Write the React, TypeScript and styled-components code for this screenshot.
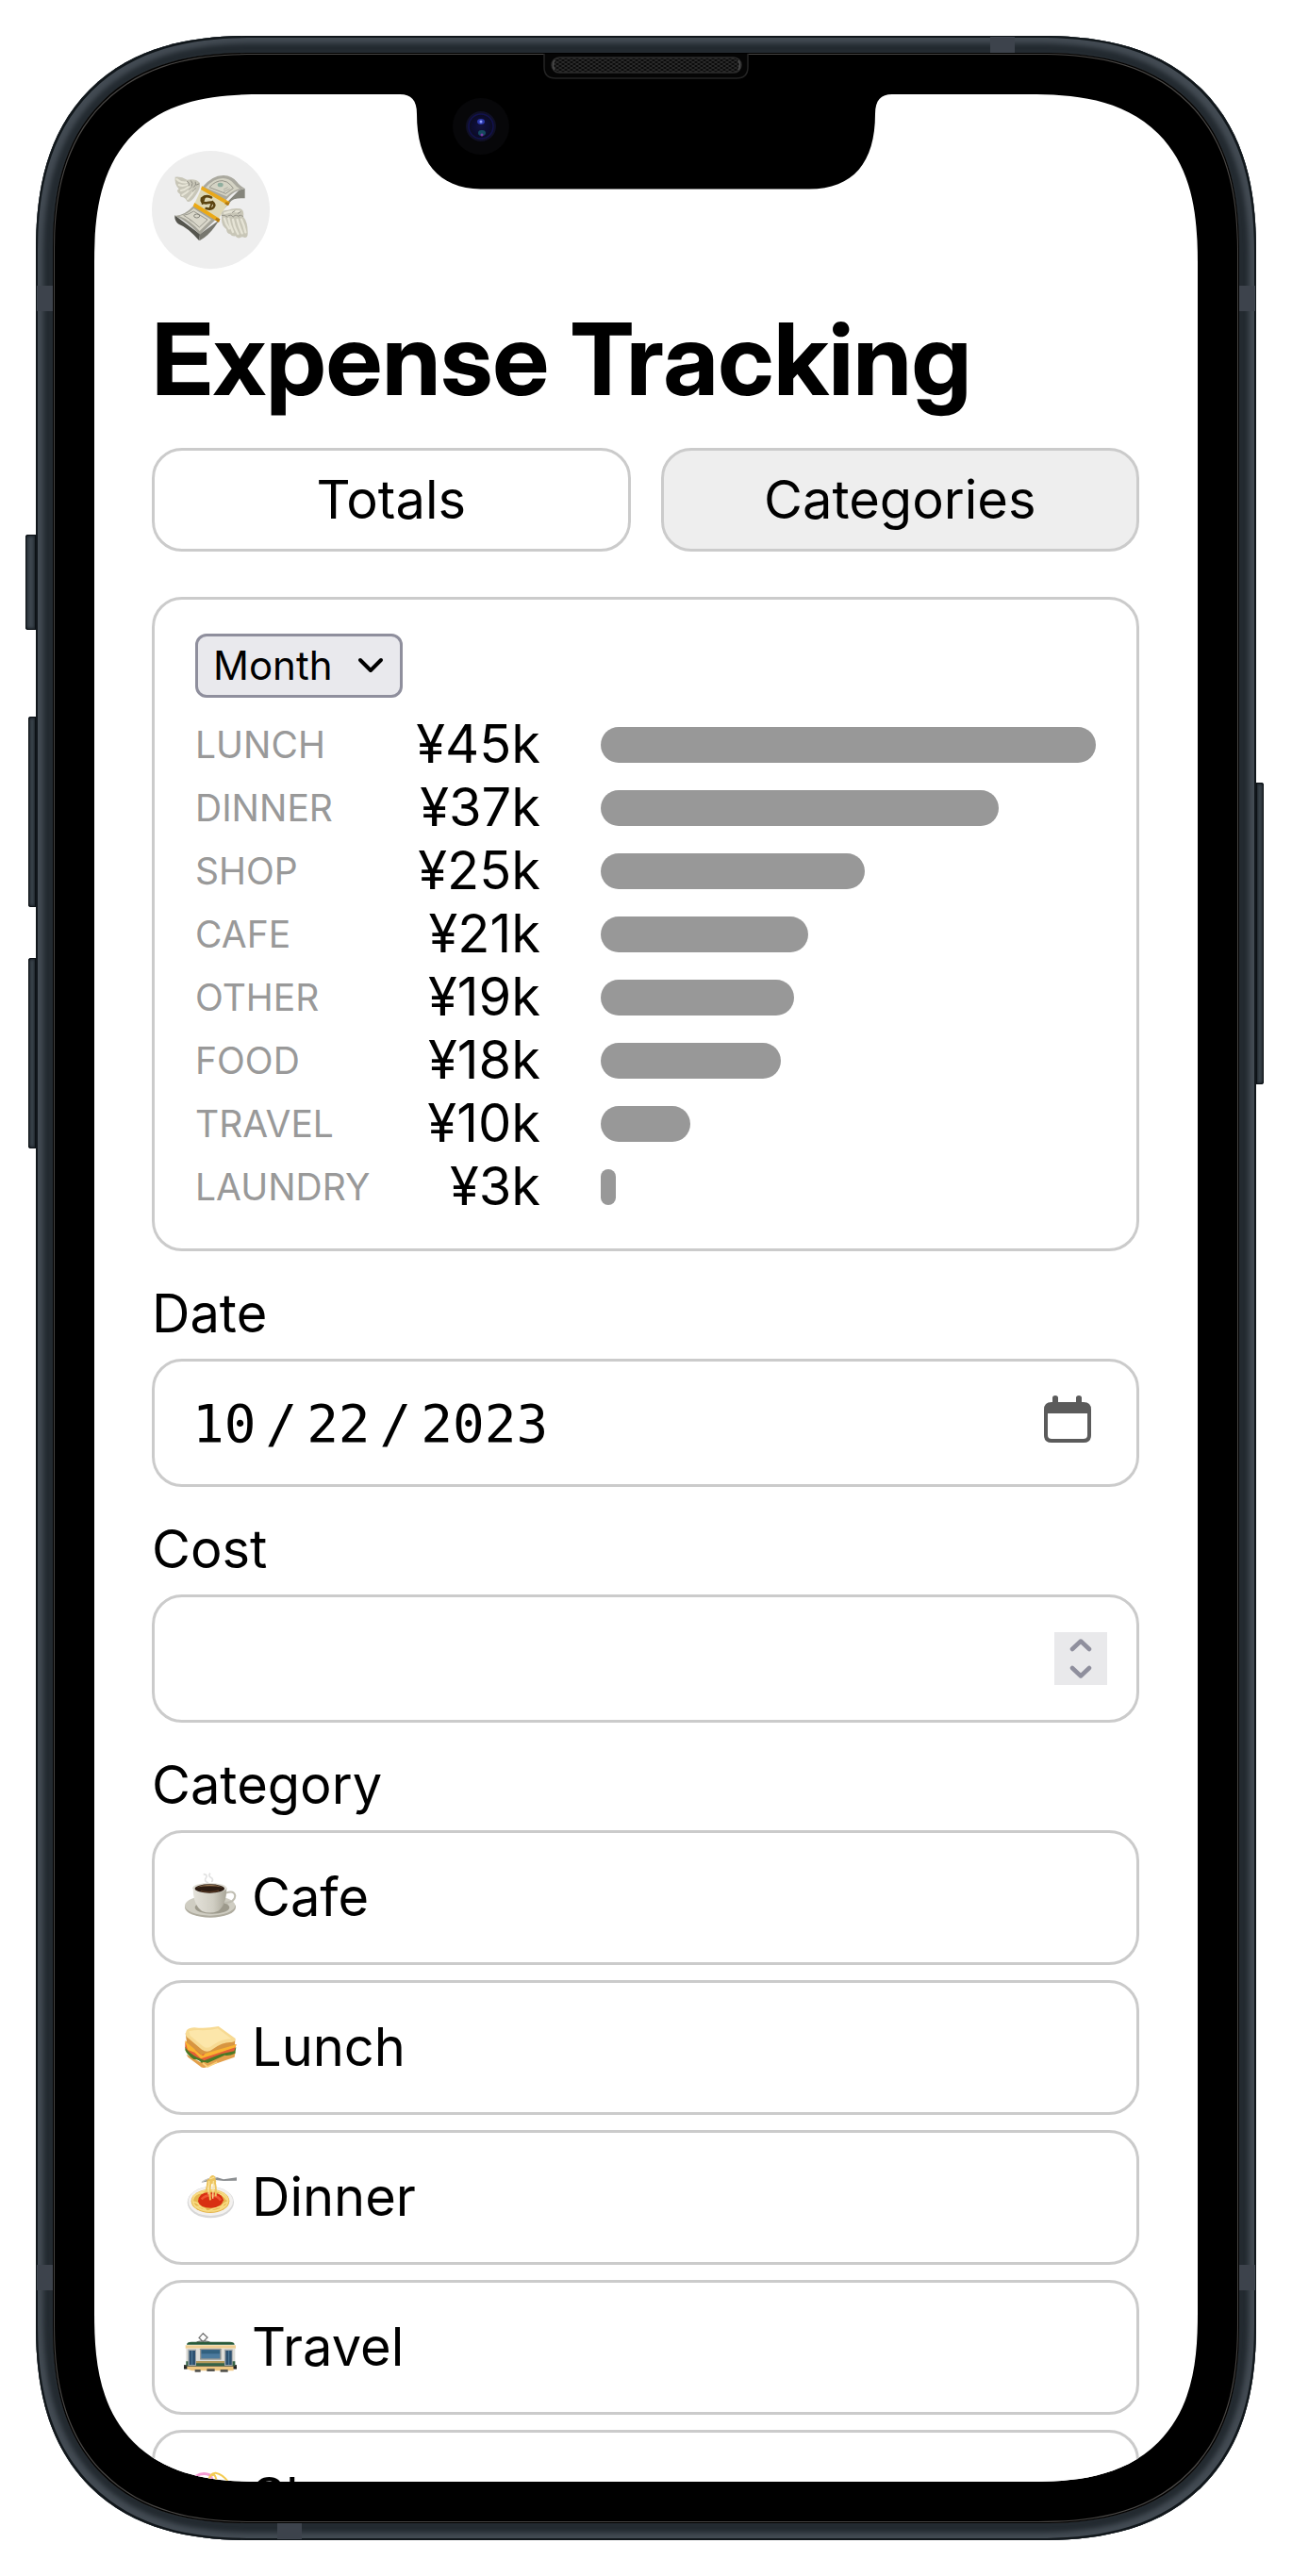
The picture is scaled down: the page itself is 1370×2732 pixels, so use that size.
import React, { useState } from "react";
import styled, { createGlobalStyle, css } from "styled-components";

const colors = {
  text: "#000",
  muted: "#999",
  line: "#cbcbcb",
  fill: "#eee",
  bar: "#989898",
  control: "#e9e9ed",
  controlLine: "#8f8f9d",
};

const GlobalStyle = createGlobalStyle`
  *, *::before, *::after { box-sizing: border-box; }
  body { margin: 0; background: #fff; }
  button, input, select { font: inherit; color: inherit; margin: 0; }
`;

/* ---------- phone ---------- */

const corner = (plain: number, smooth: number, curve: number) => css`
  border-radius: ${plain}px;
  @supports (corner-shape: squircle) {
    border-radius: ${smooth}px;
    corner-shape: superellipse(${curve});
  }
`;

const Page = styled.div`
  height: 100vh;
  padding: 38px;
  font-family: Inter, "Liberation Sans", sans-serif;
  font-size: 56px;
  line-height: 67px;
  color: ${colors.text};
`;

const Device = styled.div`
  position: relative;
  height: 100%;
  padding: 18px;
  background: #232a30;
  box-shadow: inset 0 0 0 2px #11171b, inset 0 0 5px 8px #434b53;
  ${corner(195, 230, 1.28)}
`;

const Bezel = styled.div`
  height: 100%;
  padding: 44px;
  background: #000;
  box-shadow: inset 0 0 0 1px #000, inset 0 0 0 2px #484644;
  ${corner(178, 212, 1.3)}
`;

const Screen = styled.main`
  height: 100%;
  padding: 60px 62px 0 61px;
  overflow: hidden;
  background: #fff;
  ${corner(142, 180, 1.39)}
`;

type Side = "left" | "right";

const SideButton = styled.span<{ $side: Side; $top: number; $length: number; $depth: number }>`
  position: absolute;
  ${(p) => p.$side}: ${(p) => -p.$depth}px;
  top: ${(p) => p.$top}px;
  width: ${(p) => p.$depth}px;
  height: ${(p) => p.$length}px;
  border-radius: ${(p) => (p.$side === "left" ? "3px 0 0 3px" : "0 3px 3px 0")};
  background: #3c454d;
  box-shadow: inset 0 0 0 1px #0c1115, inset 0 0 3px 2px #1c2329;
`;

const SideBand = styled.span<{ $side: Side; $edge: "top" | "bottom" }>`
  position: absolute;
  ${(p) => p.$side}: 1px;
  ${(p) => p.$edge}: 265px;
  width: 17px;
  height: 27px;
  background: #3d434c;
`;

const EndBand = styled.span<{ $side: Side; $edge: "top" | "bottom" }>`
  position: absolute;
  ${(p) => p.$edge}: 1px;
  ${(p) => p.$side}: 256px;
  width: 26px;
  height: 17px;
  background: #3d434c;
`;

const NotchArt = styled.svg`
  position: absolute;
  top: 18px;
  left: 50%;
  margin-left: -265px;
  display: block;
`;

function Notch() {
  return (
    <NotchArt width="530" height="146" viewBox="420 56 530 146" aria-hidden="true">
      <defs>
        <pattern id="mesh" width="6" height="4" patternUnits="userSpaceOnUse">
          <rect width="6" height="4" fill="#0c0c0c" />
          <path d="M0 0l3 2 3-2M0 4l3-2 3 2" stroke="#2e2e2e" strokeWidth="1" fill="none" />
        </pattern>
        <radialGradient id="lens">
          <stop offset="0" stopColor="#12123e" />
          <stop offset="0.7" stopColor="#0c0c30" />
          <stop offset="1" stopColor="#0d0d1c" />
        </radialGradient>
      </defs>
      <path d="M420 99h4v1C436 100 442 106 442 121C442 172 465 200.500 512 200.500H858C905 200.500 928 172 928 121C928 106 934 100 946 100v-1h4V60H420Z" fill="#000" />
      <path d="M577 57V71q0 12 12 12H781q12 0 12-12V57" fill="#050505" stroke="#242424" strokeWidth="1.500" />
      <rect x="585" y="61" width="201" height="16" rx="8" fill="url(#mesh)" stroke="#2c2c2c" strokeWidth="1.500" />
      <path d="M588 64q-3 5 0 10M783 64q3 5 0 10" stroke="#4c4c4c" strokeWidth="1.500" fill="none" />
      <circle cx="510" cy="134" r="30" fill="#070709" />
      <circle cx="510" cy="134" r="16" fill="#101026" />
      <circle cx="510" cy="134" r="13" fill="url(#lens)" stroke="#12124e" strokeWidth="1.500" />
      <ellipse cx="510" cy="129" rx="4" ry="3" fill="#2a36a8" />
      <circle cx="510" cy="129" r="1.500" fill="#8d9bff" />
      <ellipse cx="511" cy="141" rx="4" ry="3" fill="#15495f" />
      <circle cx="511" cy="143" r="1.500" fill="#7b39a8" />
    </NotchArt>
  );
}

/* ---------- header ---------- */

const Avatar = styled.div`
  display: flex;
  align-items: center;
  justify-content: center;
  width: 125px;
  height: 125px;
  padding-bottom: 6px;
  border-radius: 50%;
  background: ${colors.fill};
`;

const Title = styled.h1`
  margin: 32px 0 30px;
  font-family: "Inter Display", Inter, "Liberation Sans", sans-serif;
  font-size: 106px;
  line-height: 128px;
  font-weight: 700;
  white-space: nowrap;
`;

const Tabs = styled.div`
  display: grid;
  grid-template-columns: 1fr 1fr;
  gap: 32px;
`;

const Tab = styled.button<{ $active: boolean }>`
  height: 110px;
  padding: 0;
  border: 3px solid ${colors.line};
  border-radius: 32px;
  background: ${(p) => (p.$active ? colors.fill : "#fff")};
`;

/* ---------- chart ---------- */

const Card = styled.section`
  margin-top: 48px;
  padding: 36px 43px 32px;
  border: 3px solid ${colors.line};
  border-radius: 32px;
`;

const Picker = styled.div`
  display: grid;
  width: max-content;
  margin-bottom: 16px;
  align-items: center;
`;

const PeriodSelect = styled.select`
  grid-area: 1 / 1;
  height: 68px;
  padding: 0 71px 0 16px;
  border: 3px solid ${colors.controlLine};
  border-radius: 12px;
  background: ${colors.control};
  font-size: 42px;
  line-height: 60px;
  appearance: none;
`;

const Chevron = styled.svg`
  grid-area: 1 / 1;
  justify-self: end;
  margin-right: 20px;
  pointer-events: none;
`;

const Chart = styled.ul`
  margin: 0;
  padding: 0;
  list-style: none;
`;

const ChartRow = styled.li`
  display: grid;
  grid-template-columns: 200px 166px 1fr;
  align-items: center;
  height: 67px;
`;

const RowName = styled.span`
  font-size: 39px;
  color: ${colors.muted};
  text-transform: uppercase;
`;

const RowValue = styled.span`
  text-align: right;
`;

const Track = styled.div`
  margin-left: 64px;
`;

const Bar = styled.div`
  height: 38px;
  border-radius: 19px;
  background: ${colors.bar};
`;

/* ---------- form ---------- */

const Field = styled.div`
  margin-top: 33px;
`;

const FieldLabel = styled.label`
  display: block;
  margin-bottom: 14px;
`;

const InputBox = styled.div<{ $end: number }>`
  display: flex;
  align-items: center;
  height: 136px;
  padding: 0 ${(p) => p.$end}px 0 40px;
  border: 3px solid ${colors.line};
  border-radius: 32px;
`;

const TextInput = styled.input`
  flex: 1;
  min-width: 0;
  height: 100%;
  padding: 0;
  border: 0;
  outline: 0;
  background: transparent;
  font-family: "DejaVu Sans Mono", "Liberation Mono", monospace;
  font-size: 56px;
  appearance: textfield;

  &::-webkit-inner-spin-button,
  &::-webkit-outer-spin-button {
    appearance: none;
    margin: 0;
  }
  &::-webkit-calendar-picker-indicator {
    display: none;
  }
  &::-webkit-datetime-edit,
  &::-webkit-datetime-edit-month-field,
  &::-webkit-datetime-edit-day-field,
  &::-webkit-datetime-edit-year-field {
    padding: 0;
  }
  &::-webkit-datetime-edit-text {
    padding: 0 10px;
  }
`;

const IconButton = styled.button`
  display: flex;
  padding: 0 0 8px;
  border: 0;
  background: transparent;
`;

const Stepper = styled.div`
  display: flex;
  flex-direction: column;
  width: 56px;
  height: 56px;
  background: #e9e9eb;
`;

const StepButton = styled.button`
  display: flex;
  flex: 1;
  align-items: center;
  justify-content: center;
  padding: 0;
  border: 0;
  background: transparent;
`;

const CategoryField = styled.fieldset`
  margin: 33px 0 0;
  padding: 0;
  border: 0;
`;

const Legend = styled.legend`
  padding: 0;
  margin-bottom: 14px;
`;

const Options = styled.div`
  display: flex;
  flex-direction: column;
  gap: 16px;
`;

const Option = styled.label<{ $active: boolean }>`
  display: flex;
  align-items: center;
  gap: 16px;
  height: 143px;
  padding: 0 31px;
  border: 3px solid ${colors.line};
  border-radius: 32px;
  background: ${(p) => (p.$active ? colors.fill : "#fff")};
`;

const HiddenRadio = styled.input`
  position: absolute;
  opacity: 0;
  pointer-events: none;
`;

/* ---------- drawings ---------- */

function MoneyArt() {
  return (
    <svg width="80" height="70" viewBox="132 132 240 210" role="img" aria-label="Money with wings">
      <path d="M136 262L216 322L214 343Q176 300 150 291Q138 284 136 270Z" fill="#55554e" />
      <path d="M216 322L262 276L311 221Q322 205 359 208L359 177L340 182L224 300Z" fill="#85857c" />
      <path d="M216 322L278 277L262 300Q240 330 214 343Z" fill="#77776f" />
      <path d="M222 174Q255 134 292 135Q318 136 334 156Q342 168 359 177Q327 184 311 200L296 216Z" fill="#aaa99f" />
      <path d="M234 174Q260 144 289 144Q310 145 324 161Q331 171 343 177Q320 182 301 202Z" fill="#d4d3c4" />
      <path d="M246 173Q266 151 288 152Q304 154 314 166L322 176L298 193Z" fill="none" stroke="#97968b" strokeWidth="3" />
      <path d="M136 264Q166 264 196 232L265 277L216 323Q168 275 136 264Z" fill="#a5a499" />
      <path d="M150 264Q176 260 196 240L252 276L215 312Q182 276 150 264Z" fill="#d9d7ca" />
      <path d="M164 262Q180 260 196 249L240 276L214 300Q190 276 164 262Z" fill="none" stroke="#99988e" strokeWidth="3" />
      <ellipse cx="281" cy="165" rx="9" ry="7" fill="#8fae9e" />
      <ellipse cx="206" cy="264" rx="9" ry="6" fill="none" stroke="#85857b" strokeWidth="3" />
      <path d="M291 180l14-7M291 187l20-9M182 276l12 8" stroke="#aeada2" strokeWidth="3" />
      <path d="M222 174L306 222L272 279L196 231Z" fill="#ded8b6" />
      <path d="M222 169L311 220L306 230L219 180Z" fill="#e9a91b" />
      <path d="M199 222L280 274L276 284L194 233Z" fill="#eba914" />
      <path d="M299 220l12 1-5 11-12-7ZM268 270l12 4-4 10-12-7Z" fill="#b47a10" />
      <g stroke="#5c4410" strokeWidth="8" fill="none" strokeLinecap="round">
        <path d="M252 205Q234 196 222 208Q217 224 237 223Q261 216 262 231Q258 246 236 240" />
        <path d="M232 201L224 225M256 218L247 242" strokeWidth="6" />
      </g>
      <path d="M137 140Q156 137 175 149Q203 144 215 158Q220 174 203 198Q187 223 176 218Q170 208 163 205Q150 204 153 195Q137 185 149 178Q134 162 137 140Z" fill="#c8c6b8" />
      <g stroke="#e6e4d6" strokeWidth="6" fill="none" strokeLinecap="round">
        <path d="M142 147Q156 160 174 157M149 165Q160 171 178 164M156 183Q168 181 182 170M160 198Q174 191 188 176M177 210Q190 198 199 181" />
      </g>
      <g stroke="#8e8c82" strokeWidth="3" fill="none" strokeLinecap="round">
        <path d="M176 154q8 7 5 14M188 152q8 8 2 17M202 156q4 10-5 16M181 181l8-8M193 186l9-9M205 165l8-3" />
      </g>
      <path d="M285 262Q280 246 305 245Q322 238 344 241Q358 246 354 266Q369 284 368 320Q368 334 358 333Q350 329 345 333Q334 337 329 328Q319 331 312 322Q301 320 300 306Q285 296 285 276Z" fill="#c8c6b7" />
      <g stroke="#e6e4d6" strokeWidth="7" fill="none" strokeLinecap="round">
        <path d="M294 272Q298 289 309 304M307 272Q310 292 321 315M321 276Q324 299 337 321M335 276Q341 300 350 319M348 275Q357 295 361 316M295 255Q315 247 341 250" />
      </g>
      <g stroke="#96948a" strokeWidth="3" fill="none" strokeLinecap="round">
        <path d="M286 262q10-2 17 5M306 263q10-6 16 4M323 265q10-8 17 2M339 263q8-4 14 2M319 253l8-5M337 256l8-5" />
      </g>
    </svg>
  );
}

const Emoji = ({ children }: { children: React.ReactNode }) => (
  <svg width="56" height="56" viewBox="0 0 168 168" aria-hidden="true">
    {children}
  </svg>
);

const CoffeeArt = () => (
  <Emoji>
    <defs>
      <linearGradient id="cup" x1="0" x2="1">
        <stop offset="0" stopColor="#e4e2da" />
        <stop offset="0.6" stopColor="#d0cec3" />
        <stop offset="1" stopColor="#a9a698" />
      </linearGradient>
    </defs>
    <path d="M62 8q16 2 8 12t8 16M84 5q-8 8 2 14t2 14" stroke="#e2e2e2" strokeWidth="5" fill="none" />
    <ellipse cx="84" cy="113" rx="81" ry="33" fill="#aeab9e" />
    <ellipse cx="83" cy="108" rx="80" ry="32" fill="#cfcdc2" />
    <ellipse cx="90" cy="114" rx="55" ry="20" fill="#9d9a8c" />
    <path d="M134 68Q160 58 163 77Q162 99 130 99" fill="none" stroke="#bfbdb1" strokeWidth="6" />
    <path d="M29 51Q29 105 57 125Q82 136 109 125Q136 105 136 51Z" fill="url(#cup)" />
    <ellipse cx="82" cy="52" rx="54" ry="16" fill="#dedcd3" />
    <ellipse cx="82" cy="54" rx="47" ry="14" fill="#2c1c12" />
    <path d="M39 50Q82 33 125 50Q82 42 39 50Z" fill="#9b7a56" />
    <path d="M54 61Q82 69 111 60" stroke="#523521" strokeWidth="4" fill="none" />
  </Emoji>
);

const SandwichArt = () => (
  <Emoji>
    <path d="M8 104L52 129L164 96L161 113L75 143Q60 152 50 141L13 113Z" fill="#e3a04b" />
    <path d="M4 80L57 113L166 82L163 101Q142 110 130 107L75 132Q65 127 56 131Q45 118 31 120Q10 106 4 91Z" fill="#4b7a25" />
    <path d="M4 66L58 100L167 73L160 94L119 103L65 124L41 113Q20 104 4 82Z" fill="#e45e36" />
    <path d="M3 61Q27 70 37 91Q49 104 61 109L73 95L166 72L164 82L88 107L54 118L34 98L12 90Z" fill="#f9b431" />
    <path d="M5 37L56 80Q74 90 88 78L163 58L162 74L87 96L56 106L9 67Z" fill="#d79541" />
    <path d="M9 27Q22 15 47 20Q76 22 110 15L164 54Q166 63 151 66Q124 64 93 87Q76 102 57 89L8 48Q3 39 9 27Z" fill="#f7da93" />
    <path d="M16 31Q40 25 60 28Q88 28 108 22L151 55Q119 55 91 76Q74 90 60 78L20 45Z" fill="#fce6aa" />
    <path d="M60 132l15 12 31-15" stroke="#f7ce78" strokeWidth="5" fill="none" />
  </Emoji>
);

const SpaghettiArt = () => (
  <Emoji>
    <ellipse cx="85" cy="98" rx="74" ry="50" fill="#d7d7d7" />
    <ellipse cx="85" cy="95" rx="71" ry="46" fill="#f3f1ef" />
    <ellipse cx="84" cy="94" rx="61" ry="38" fill="#e5b64e" />
    <g fill="none" stroke="#f8dc84" strokeWidth="5">
      <ellipse cx="84" cy="93" rx="56" ry="33" />
      <path d="M28 80q26-22 48-5M92 72q30-7 45 19M35 113q17-5 36 9M77 127q24-16 55-16M30 97q15 0 26 18M116 120q4-16 22-23" />
    </g>
    <path d="M45 95Q47 67 80 66Q121 66 126 91Q119 116 87 116Q50 115 45 95Z" fill="#d82f12" />
    <path d="M56 88q14-14 34-12t27 16" stroke="#ef5530" strokeWidth="8" fill="none" />
    <path d="M55 35Q76 19 101 17L126 25L168 19V29L126 30L100 27Z" fill="#8d9092" />
    <path d="M58 33Q80 18 104 20" stroke="#c7c9ca" strokeWidth="4" fill="none" />
    <path d="M77 25Q75 48 70 66M88 24Q79 58 84 91M95 25Q104 45 101 79" fill="none" stroke="#edc45d" strokeWidth="6" />
    <path d="M83 17Q90 8 99 16L103 34Q86 45 75 34Z" fill="#edc45d" />
    <path d="M80 30l-2 43M94 30l-2 56M82 24l15-6" stroke="#fbe398" strokeWidth="4" />
  </Emoji>
);

const TramArt = () => (
  <Emoji>
    <path d="M48 52L61 38L75 51L61 65ZM41 66Q61 59 82 66" fill="none" stroke="#777" strokeWidth="4" />
    <path d="M9 74Q9 65 24 65H146Q161 65 161 74Z" fill="#285a38" />
    <path d="M5 76H165V86H5Z" fill="#efcf94" />
    <path d="M7 86H163V140H7Z" fill="#deddd8" />
    <path d="M0 138H168V151H0Z" fill="#484842" />
    <path d="M7 127H163V142H7Z" fill="#366347" />
    <path d="M33 126H130V133H33Z" fill="#b59a5d" />
    <path d="M9 143H158V157H25L9 151Z" fill="#efc782" />
    <rect x="13" y="89" width="26" height="52" fill="#9ea5a8" />
    <rect x="17" y="93" width="19" height="45" fill="#2c506f" />
    <rect x="129" y="89" width="26" height="52" fill="#9ea5a8" />
    <rect x="133" y="93" width="19" height="45" fill="#2c506f" />
    <path d="M26 93v45M143 93v45" stroke="#54809f" strokeWidth="3" />
    <rect x="51" y="86" width="68" height="36" rx="2" fill="#999994" />
    <rect x="55" y="90" width="60" height="28" fill="#4b7a9d" />
    <path d="M56 91h58v12H56Z" fill="#32617f" />
    <path d="M35 157h18M73 155h25M116 157h24" stroke="#55544e" strokeWidth="8" />
    <path d="M0 147h10M158 147h10" stroke="#222" strokeWidth="9" />
  </Emoji>
);

const BagsArt = () => (
  <Emoji>
    <path d="M38 55V16Q60 2 83 12Q92 24 95 57" fill="none" stroke="#f59bd3" strokeWidth="9" />
    <path d="M76 48Q78 4 101 5Q128 10 147 43M89 13Q103 3 106 48M120 35h36" fill="none" stroke="#f3cb52" strokeWidth="6" />
    <path d="M18 58H93L101 160H9Z" fill="#ec6ebc" />
    <path d="M80 49H158L151 151H86Z" fill="#f3c340" />
  </Emoji>
);

function CalendarArt() {
  return (
    <svg width="50" height="50" viewBox="0 0 50 50" aria-hidden="true">
      <path
        fillRule="evenodd"
        fill="#5b5b5b"
        d="M9 7V2.500Q9 0 12 0t3 2.500V7H34V2.500Q34 0 37 0t3 2.500V7h2q8 0 8 8V42q0 8-8 8H8q-8 0-8-8V15Q0 7 8 7ZM4 19V42q0 4 4 4H42q4 0 4-4V19Z"
      />
    </svg>
  );
}

function StepArt({ up }: { up?: boolean }) {
  return (
    <svg width="24" height="14" viewBox="0 0 24 14" aria-hidden="true">
      <path
        d={up ? "M3 11L12 2.500L21 11" : "M3 3L12 11.500L21 3"}
        fill="none"
        stroke={colors.controlLine}
        strokeWidth="4.500"
        strokeLinecap="round"
        strokeLinejoin="round"
      />
    </svg>
  );
}

/* ---------- data ---------- */

const spending = [
  { name: "Lunch", value: "¥45k", share: 100 },
  { name: "Dinner", value: "¥37k", share: 80.4 },
  { name: "Shop", value: "¥25k", share: 53.3 },
  { name: "Cafe", value: "¥21k", share: 41.9 },
  { name: "Other", value: "¥19k", share: 39 },
  { name: "Food", value: "¥18k", share: 36.4 },
  { name: "Travel", value: "¥10k", share: 18.1 },
  { name: "Laundry", value: "¥3k", share: 3 },
];

const categories = [
  { name: "Cafe", Art: CoffeeArt },
  { name: "Lunch", Art: SandwichArt },
  { name: "Dinner", Art: SpaghettiArt },
  { name: "Travel", Art: TramArt },
  { name: "Shop", Art: BagsArt },
];

export default function App() {
  const [tab, setTab] = useState("Categories");
  const [date, setDate] = useState("2023-10-22");
  const [cost, setCost] = useState("");
  const [category, setCategory] = useState("");

  const step = (by: number) => setCost(String(Number(cost) + by));

  return (
    <>
      <GlobalStyle />
      <Page>
        <Device>
          <SideButton $side="left" $top={529} $length={101} $depth={11} />
          <SideButton $side="left" $top={722} $length={202} $depth={8} />
          <SideButton $side="left" $top={978} $length={202} $depth={8} />
          <SideButton $side="right" $top={792} $length={320} $depth={8} />
          <SideBand $side="left" $edge="top" />
          <SideBand $side="right" $edge="top" />
          <SideBand $side="left" $edge="bottom" />
          <SideBand $side="right" $edge="bottom" />
          <EndBand $side="right" $edge="top" />
          <EndBand $side="left" $edge="bottom" />
          <Bezel>
            <Screen>
              <Avatar>
                <MoneyArt />
              </Avatar>
              <Title>Expense Tracking</Title>
              <Tabs>
                {["Totals", "Categories"].map((name) => (
                  <Tab key={name} type="button" $active={tab === name} aria-pressed={tab === name} onClick={() => setTab(name)}>
                    {name}
                  </Tab>
                ))}
              </Tabs>

              <Card>
                <Picker>
                  <PeriodSelect aria-label="Period" defaultValue="Month">
                    <option>Month</option>
                    <option>Week</option>
                    <option>Year</option>
                  </PeriodSelect>
                  <Chevron width="28" height="18" viewBox="0 0 28 18" aria-hidden="true">
                    <path d="M3 3L14 14L25 3" fill="none" stroke="#000" strokeWidth="4" strokeLinecap="round" strokeLinejoin="round" />
                  </Chevron>
                </Picker>
                <Chart>
                  {spending.map((row) => (
                    <ChartRow key={row.name}>
                      <RowName>{row.name}</RowName>
                      <RowValue>{row.value}</RowValue>
                      <Track>
                        <Bar style={{ width: `${row.share}%` }} />
                      </Track>
                    </ChartRow>
                  ))}
                </Chart>
              </Card>

              <Field>
                <FieldLabel htmlFor="date">Date</FieldLabel>
                <InputBox $end={48}>
                  <TextInput id="date" type="date" value={date} onChange={(e) => setDate(e.target.value)} />
                  <IconButton type="button" aria-label="Open calendar">
                    <CalendarArt />
                  </IconButton>
                </InputBox>
              </Field>

              <Field>
                <FieldLabel htmlFor="cost">Cost</FieldLabel>
                <InputBox $end={31}>
                  <TextInput id="cost" type="number" value={cost} onChange={(e) => setCost(e.target.value)} />
                  <Stepper>
                    <StepButton type="button" aria-label="Increase cost" onClick={() => step(1)}>
                      <StepArt up />
                    </StepButton>
                    <StepButton type="button" aria-label="Decrease cost" onClick={() => step(-1)}>
                      <StepArt />
                    </StepButton>
                  </Stepper>
                </InputBox>
              </Field>

              <CategoryField>
                <Legend>Category</Legend>
                <Options>
                  {categories.map(({ name, Art }) => (
                    <Option key={name} $active={category === name}>
                      <HiddenRadio type="radio" name="category" checked={category === name} onChange={() => setCategory(name)} />
                      <Art />
                      {name}
                    </Option>
                  ))}
                </Options>
              </CategoryField>
            </Screen>
          </Bezel>
          <Notch />
        </Device>
      </Page>
    </>
  );
}
